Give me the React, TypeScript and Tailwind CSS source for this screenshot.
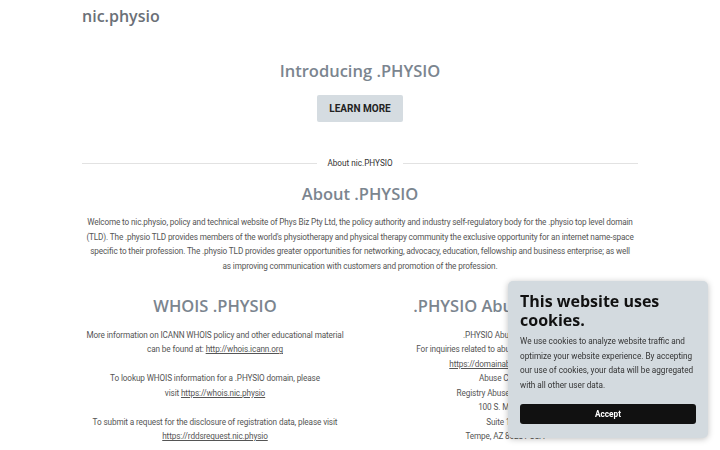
import React from 'react';

const heading = "font-['Open_Sans',sans-serif]";
const body = "font-['Roboto',sans-serif]";

const Link = ({ href }: { href: string }) => (
  <a href={href} className="underline underline-offset-1 text-[#555]">
    {href}
  </a>
);

const CookieBanner: React.FC = () => (
  <div className="fixed right-[12px] bottom-[12px] w-[200px] rounded-[5px] bg-[#d3dadf] px-[12px] pt-[11px] pb-[14px] shadow-[0_1px_6px_rgba(0,0,0,0.25)]">
    <h3 className={`${heading} text-[16px] font-bold leading-[19px] text-[#111]`}>
      This website uses cookies.
    </h3>
    <p className={`${body} mt-[4px] text-[8.2px] leading-[14.5px] text-[#333]`}>
      We use cookies to analyze website traffic and optimize your website experience. By accepting our use of cookies, your data will be aggregated with all other user data.
    </p>
    <button className={`${body} mt-[12px] h-[20px] w-full rounded-[3px] bg-[#111] text-[8.2px] font-bold text-white`}>
      Accept
    </button>
  </div>
);

export default function App() {
  return (
    <div className={`${body} min-h-screen bg-white text-[#555]`}>
      <div className="mx-auto w-[556px]">
        {/* Site header */}
        <header className="h-[32px] flex items-center">
          <span className={`${heading} text-[16px] font-semibold text-[#6b7077]`}>nic.physio</span>
        </header>

        {/* Hero */}
        <section className="flex flex-col items-center pt-[27px]">
          <h1 className={`${heading} text-[16.5px] font-semibold leading-[24px] text-[#7b858f]`}>
            Introducing .PHYSIO
          </h1>
          <button className="mt-[12px] h-[27px] w-[86px] rounded-[2px] bg-[#d5dce1] text-[10px] font-bold text-[#222]">
            LEARN MORE
          </button>
        </section>

        {/* Divider with label */}
        <div className="mt-[35px] flex items-center gap-[10px]">
          <div className="h-px flex-1 bg-[#e2e2e2]" />
          <span className="text-[8.2px] text-[#333]">About nic.PHYSIO</span>
          <div className="h-px flex-1 bg-[#e2e2e2]" />
        </div>

        {/* About */}
        <section className="mt-[13px] flex flex-col items-center">
          <h2 className={`${heading} text-[16.5px] font-semibold leading-[24px] text-[#7b858f]`}>
            About .PHYSIO
          </h2>
          <p className="mt-[9px] px-[3px] text-center text-[8.2px] leading-[14.6px] tracking-[-0.14px]">
            Welcome to nic.physio, policy and technical website of Phys Biz Pty Ltd, the policy authority and industry self-regulatory body for the .physio top level domain (TLD). The .physio TLD provides members of the world's physiotherapy and physical therapy community the exclusive opportunity for an internet name-space specific to their profession. The .physio TLD provides greater opportunities for networking, advocacy, education, fellowship and business enterprise; as well as{'\u00a0'}improving communication with customers and promotion of the profession.
          </p>
        </section>

        {/* Two columns */}
        <section className="mt-[20px] grid grid-cols-2 gap-[24px]">
          <div className="flex flex-col items-center text-center">
            <h2 className={`${heading} text-[16.5px] font-semibold leading-[24px] text-[#7b858f]`}>
              WHOIS .PHYSIO
            </h2>
            <div className="mt-[10px] flex flex-col gap-[14.5px] text-[8.2px] leading-[14.5px] tracking-[-0.12px]">
              <p>
                More information on ICANN WHOIS policy and other educational material can be found at: <Link href="http://whois.icann.org" />
              </p>
              <p>
                To lookup WHOIS information for a .PHYSIO domain, please
                <br />
                visit <Link href="https://whois.nic.physio" />
              </p>
              <p>
                To submit a request for the disclosure of registration data, please visit <Link href="https://rddsrequest.nic.physio" />
              </p>
            </div>
          </div>
          <div className="flex flex-col items-center text-center">
            <h2 className={`${heading} text-[16.5px] font-semibold leading-[24px] text-[#7b858f] whitespace-nowrap`}>
              .PHYSIO Abuse Contact
            </h2>
            <div className="mt-[10px] text-[8.2px] leading-[14.5px] tracking-[-0.12px]">
              <p>.PHYSIO Abuse Contact</p>
              <p>For inquiries related to abuse of .PHYSIO domains:</p>
              <p><Link href="https://domainabuse.nic.physio" /></p>
              <p>Abuse Contact</p>
              <p>Registry Abuse Department</p>
              <p>100 S. Mill Ave.</p>
              <p>Suite 1600</p>
              <p>Tempe, AZ 85281 USA</p>
            </div>
          </div>
        </section>
        <div className="h-[60px]" />
      </div>
      <CookieBanner />
    </div>
  );
}
